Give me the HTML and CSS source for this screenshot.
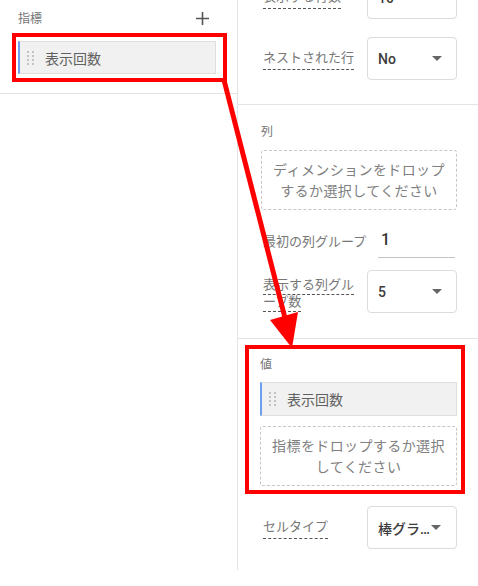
FILE: index.html
```html
<!DOCTYPE html>
<html lang="ja">
  <head>
    <meta charset="UTF-8" />
    <meta name="viewport" content="width=device-width, initial-scale=1.0" />
    <title>表の設定</title>
    <link rel="stylesheet" href="styles.css">
  </head>
  <body>
    <div class="page">
      <aside class="fields">
        <div class="fields-block">
          <div class="fields-head">
            <span class="caption">指標</span>
            <svg class="add" width="13" height="13" viewBox="0 0 13 13">
              <path d="M6.5 0v13M0 6.5h13" stroke="#555" stroke-width="1.6" />
            </svg>
          </div>
          <div class="mark mark-small">
            <div class="chip">
              <span class="handle"><i></i><i></i><i></i><i></i><i></i><i></i><i></i><i></i></span>
              <span>表示回数</span>
            </div>
          </div>
        </div>
      </aside>

      <main class="setup">
        <section class="group group-top">
          <div class="row">
            <span class="dotted">表示する行数</span>
            <div class="select"><span>10</span><span class="caret"></span></div>
          </div>
          <div class="row">
            <span class="dotted">ネストされた行</span>
            <div class="select"><span>No</span><span class="caret"></span></div>
          </div>
        </section>

        <section class="group group-cols">
          <div class="caption">列</div>
          <div class="drop">ディメンションをドロップ<br>するか選択してください</div>
          <div class="row row-input">
            <span class="plain">最初の列グループ</span>
            <div class="input">1</div>
          </div>
          <div class="row row-select">
            <div class="wrap-label"><span class="dotted">表示する列グループ数</span></div>
            <div class="select"><span>5</span><span class="caret"></span></div>
          </div>
        </section>

        <section class="group group-values">
          <div class="mark mark-big">
            <div class="caption">値</div>
            <div class="chip">
              <span class="handle"><i></i><i></i><i></i><i></i><i></i><i></i><i></i><i></i></span>
              <span>表示回数</span>
            </div>
            <div class="drop">指標をドロップするか選択<br>してください</div>
          </div>
          <div class="row row-cell">
            <span class="dotted">セルタイプ</span>
            <div class="select"><span>棒グラ…</span><span class="caret"></span></div>
          </div>
        </section>
      </main>

      <svg class="arrow" width="478" height="586" viewBox="0 0 478 586">
        <line x1="224" y1="80" x2="285" y2="318" stroke="#f00" stroke-width="5" />
        <polygon points="298,312 270,320 292,348" fill="#f00" />
      </svg>
    </div>
  </body>
</html>
```

FILE: styles.css
```css
* {
  box-sizing: border-box;
}
body {
  margin: 0;
  background: #fff;
  color: #5f6368;
  font-family: "Noto Sans CJK JP", "Noto Sans", sans-serif;
}
.page {
  position: relative;
  display: flex;
  width: 478px;
  height: 586px;
  overflow: hidden;
}

/* left column */
.fields {
  width: 238px;
  height: 570px;
  border-right: 1px solid #e3e3e3;
}
.fields-block {
  padding: 10px 0 11px 0;
  border-bottom: 1px solid #e3e3e3;
}
.fields-head {
  display: flex;
  align-items: center;
  justify-content: space-between;
  height: 16px;
  margin-bottom: 7px;
  padding: 0 28px 0 18px;
}
.caption {
  font-size: 12px;
  line-height: 16px;
  color: #757575;
}
.add {
  display: block;
}

/* red annotation frames */
.mark {
  border: 4px solid #f00;
}
.mark-small {
  width: 215px;
  margin-left: 12px;
  padding: 4px 7px 4px 2px;
}
.mark-big {
  margin: 0 -8px 0 -16px;
  padding: 7px 4px 4px 11px;
}
.mark-big .caption {
  margin-bottom: 10px;
}
.mark-big .chip {
  height: 34px;
  margin-bottom: 10px;
}

.chip {
  display: flex;
  align-items: center;
  gap: 11px;
  height: 33px;
  padding-left: 7px;
  background: #f1f1f1;
  border: 1px solid #dedede;
  border-left: 2px solid #6d9ef0;
  font-size: 14px;
  color: #606060;
}
.handle {
  display: grid;
  grid-template-columns: 2px 2px;
  gap: 2px 3px;
}
.handle i {
  width: 2px;
  height: 2px;
  background: #c2c2c2;
}

/* right column */
.setup {
  flex: 1;
}
.group {
  padding: 0 21px 0 23px;
}
.group-top {
  display: flex;
  flex-direction: column;
  gap: 18px;
  margin-top: -24px;
  padding-bottom: 24px;
  border-bottom: 1px solid #e3e3e3;
}
.group-cols {
  padding-top: 18px;
  padding-bottom: 25px;
  border-bottom: 1px solid #e3e3e3;
}
.group-cols .caption {
  margin-bottom: 11px;
}
.group-values {
  padding-top: 6px;
}

.row {
  display: flex;
  align-items: center;
  justify-content: space-between;
  padding-left: 2px;
  font-size: 13px;
  color: #777;
}
.dotted {
  padding-bottom: 3px;
  border-bottom: 1px dashed #555;
}
.wrap-label {
  width: 96px;
  line-height: 17px;
}
.wrap-label .dotted {
  padding-bottom: 1px;
}
.row-input {
  height: 36px;
  margin-top: 12px;
}
.row-select {
  margin-top: 12px;
}
.row-cell {
  margin-top: 12px;
}

.select {
  display: flex;
  align-items: center;
  justify-content: space-between;
  width: 90px;
  height: 43px;
  padding: 0 14px 0 10px;
  border: 1px solid #dadce0;
  border-radius: 4px;
  font-family: Roboto, "Noto Sans CJK JP", sans-serif;
  font-size: 14px;
  font-weight: 500;
  color: #3c3c3c;
}
.row-cell .select {
  padding-right: 15px;
}
.caret {
  width: 0;
  height: 0;
  border-left: 5px solid transparent;
  border-right: 5px solid transparent;
  border-top: 5px solid #666;
}
.input {
  display: flex;
  align-items: center;
  width: 77px;
  height: 36px;
  margin-right: 2px;
  padding-left: 3px;
  border-bottom: 1px solid #c4c4c4;
  font-family: Roboto, sans-serif;
  font-size: 16px;
  font-weight: 500;
  color: #333;
}

.drop {
  display: flex;
  align-items: center;
  justify-content: center;
  height: 60px;
  border: 1px dashed #c6c6c6;
  border-radius: 3px;
  text-align: center;
  font-size: 14px;
  line-height: 21px;
  letter-spacing: 0.4px;
  color: #808080;
}

.arrow {
  position: absolute;
  top: 0;
  left: 0;
  pointer-events: none;
}
```
